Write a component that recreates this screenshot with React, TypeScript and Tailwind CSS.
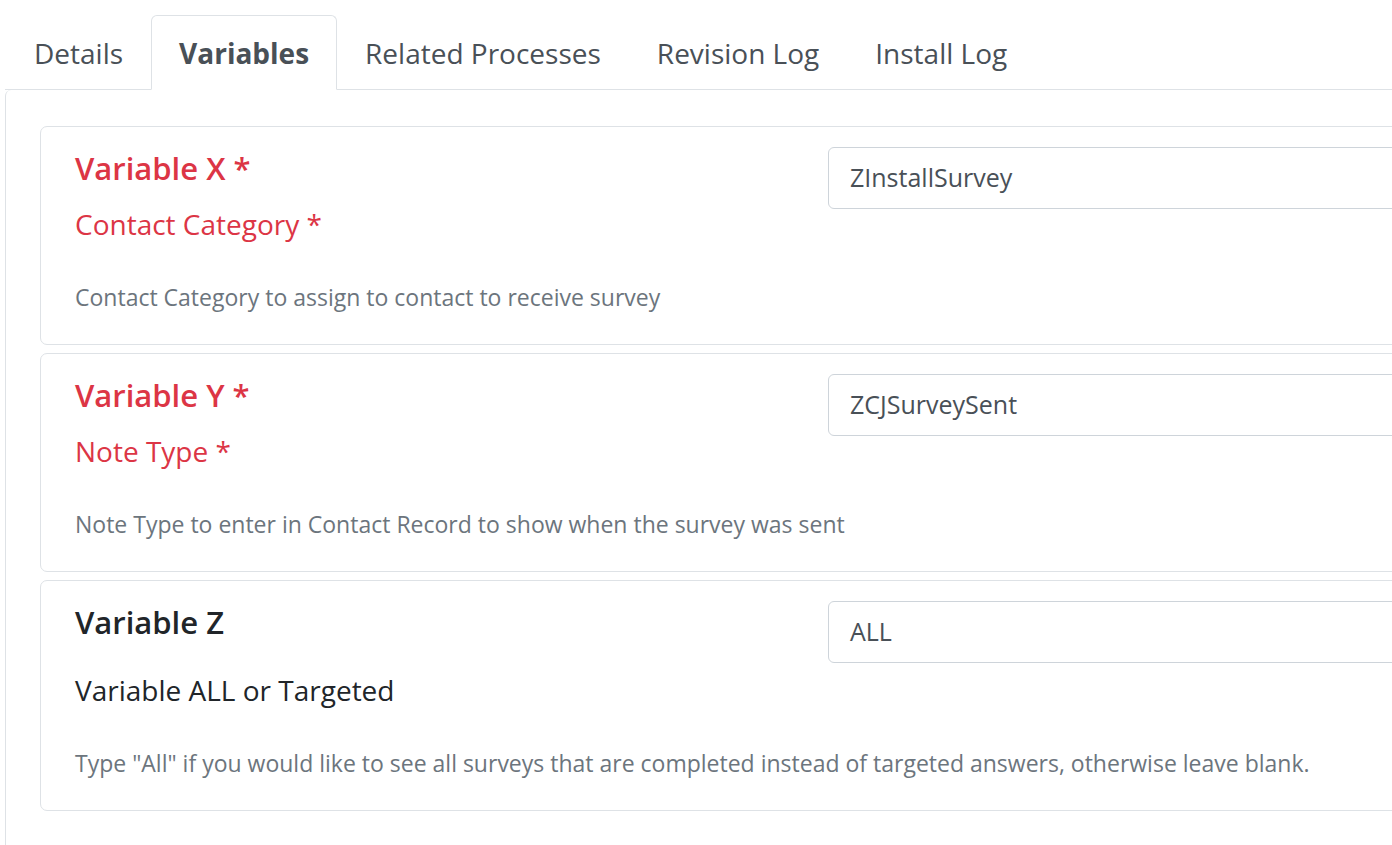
import React from 'react';

const tabs = ['Details', 'Variables', 'Related Processes', 'Revision Log', 'Install Log'];

const variables = [
  {
    name: 'Variable X',
    label: 'Contact Category',
    required: true,
    value: 'ZInstallSurvey',
    help: 'Contact Category to assign to contact to receive survey',
  },
  {
    name: 'Variable Y',
    label: 'Note Type',
    required: true,
    value: 'ZCJSurveySent',
    help: 'Note Type to enter in Contact Record to show when the survey was sent',
  },
  {
    name: 'Variable Z',
    label: 'Variable ALL or Targeted',
    required: false,
    value: 'ALL',
    help: 'Type "All" if you would like to see all surveys that are completed instead of targeted answers, otherwise leave blank.',
  },
];

export default function App() {
  return (
    <div
      className="h-[845px] w-full overflow-hidden bg-white"
      style={{ fontFamily: '"Open Sans", "Noto Sans", sans-serif' }}
    >
      <div className="w-[1800px]">
        {/* tabs */}
        <ul className="ml-[5px] flex border-b border-[#dee2e6] pl-[1px] pt-[15px]">
          {tabs.map((t) => (
            <li
              key={t}
              className={
                t === 'Variables'
                  ? '-mb-px flex h-[75px] items-center rounded-t-[6px] border border-[#dee2e6] border-b-white bg-white px-[27px] text-[28px] font-bold text-[#495057]'
                  : '-mb-px flex h-[75px] items-center rounded-t-[6px] border border-transparent px-[27px] text-[28px] text-[#495057]'
              }
            >
              {t}
            </li>
          ))}
        </ul>

        {/* tab content */}
        <div className="ml-[5px] h-[800px] rounded-tl-[6px] border-l border-[#dee2e6] pl-[34px] pt-[36px]">
          <div className="flex flex-col gap-[8px]">
            {variables.map((v) => (
              <div key={v.name} className="flex rounded-[7px] border border-[#dee2e6] pb-[28px] pl-[34px] pt-[20px]">
                <div className="w-[753px] shrink-0">
                  <h5
                    className={
                      v.required
                        ? 'mb-[14px] text-[31px] font-semibold leading-[42px] text-[#dc3545]'
                        : 'mb-[14px] text-[31px] font-semibold leading-[42px] text-[#212529]'
                    }
                  >
                    {v.name}
                    {v.required && ' *'}
                  </h5>
                  <div
                    className={
                      v.required
                        ? 'text-[28px] leading-[42px] text-[#dc3545]'
                        : 'mt-[26px] text-[28px] leading-[42px] text-[#212529]'
                    }
                  >
                    {v.label}
                    {v.required && ' *'}
                  </div>
                  <div className="mt-[34px] whitespace-nowrap text-[23px] leading-[37px] text-[#6c757d]">{v.help}</div>
                </div>
                <div className="flex h-[62px] w-[800px] items-center rounded-[6px] border border-[#ced4da] px-[21px] text-[25px] text-[#495057]">
                  {v.value}
                </div>
              </div>
            ))}
          </div>
        </div>
      </div>
    </div>
  );
}
